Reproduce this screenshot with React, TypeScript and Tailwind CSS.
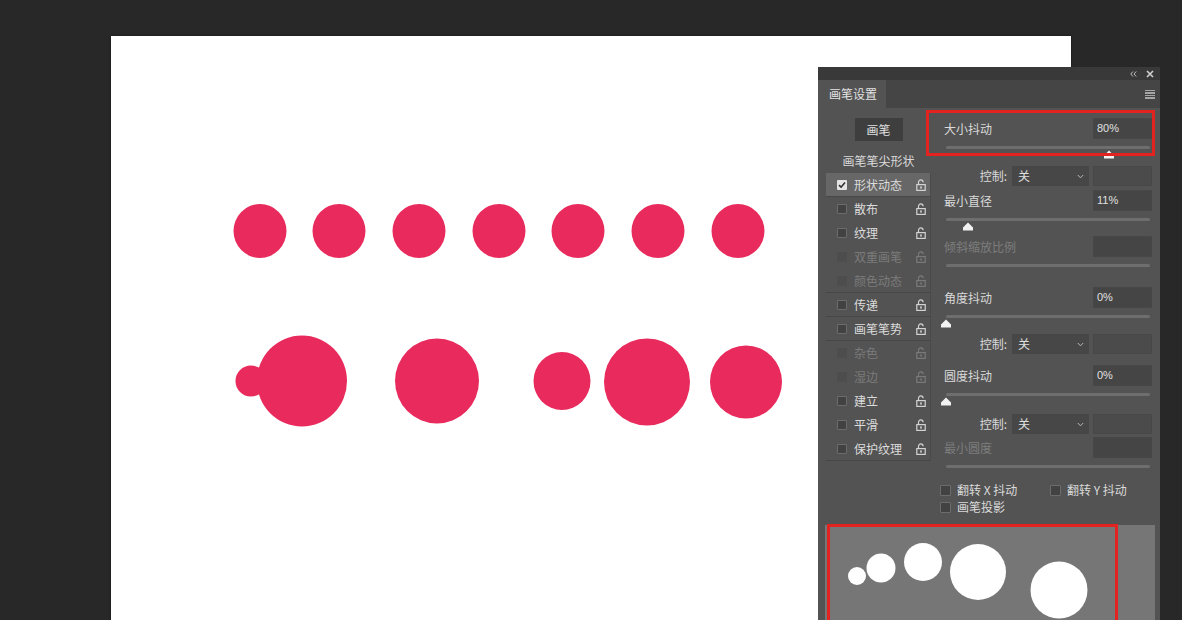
import React from 'react';

const CJK = "font-['Noto_Sans_CJK_SC','Liberation_Sans',sans-serif]";

type ListItem = { label: string; checked?: boolean; disabled?: boolean; lineAfter?: boolean };

const items: ListItem[] = [
  { label: '形状动态', checked: true, lineAfter: true },
  { label: '散布' },
  { label: '纹理' },
  { label: '双重画笔', disabled: true },
  { label: '颜色动态', disabled: true, lineAfter: true },
  { label: '传递', lineAfter: true },
  { label: '画笔笔势', lineAfter: true },
  { label: '杂色', disabled: true },
  { label: '湿边', disabled: true },
  { label: '建立' },
  { label: '平滑' },
  { label: '保护纹理', lineAfter: true },
];

/** Open padlock glyph used at the end of each list row. */
function Lock({ dim }: { dim?: boolean }) {
  return (
    <svg width="10" height="12" viewBox="0 0 10 12" className={dim ? 'opacity-30' : ''}>
      <path d="M2.5 5.5 V3.2 a2.3 2.3 0 0 1 4.6 0" fill="none" stroke="#d4d4d4" strokeWidth="1.2" />
      <rect x="0.8" y="5.6" width="8.4" height="5.8" fill="none" stroke="#d4d4d4" strokeWidth="1.2" />
      <rect x="4.2" y="7.4" width="1.6" height="2.2" fill="#d4d4d4" />
    </svg>
  );
}

function Check({ checked, disabled, size = 10 }: { checked?: boolean; disabled?: boolean; size?: number }) {
  if (checked) {
    return (
      <span className="flex h-[10px] w-[10px] flex-shrink-0 items-center justify-center rounded-[1px] bg-[#e4e4e4]">
        <svg width="8" height="8" viewBox="0 0 8 8">
          <path d="M1 4.2 L3.1 6.2 L7 1.6" fill="none" stroke="#2f2f2f" strokeWidth="1.6" />
        </svg>
      </span>
    );
  }
  return (
    <span
      style={{ width: size, height: size }}
      className={[
        'flex-shrink-0 rounded-[1px]',
        disabled ? 'bg-[#4d4d4d]' : 'border border-[#6c6c6c] bg-[#424242]',
      ].join(' ')}
    />
  );
}

function Thumb() {
  return (
    <svg width="11" height="9" viewBox="0 0 11 9">
      <path d="M5.5 0.5 L10.5 5.5 V8.5 H0.5 V5.5 Z" fill="#f2f2f2" />
    </svg>
  );
}

/** Thin track with an optional handle; value is 0..100. */
function Slider({ value }: { value?: number }) {
  return (
    <div className="relative ml-[2px] mr-[2px] h-[19px] pt-[7px]">
      <div className="h-[3px] rounded-full bg-[#6e6e6e]" />
      {value !== undefined && (
        <div className="absolute top-[11px] -translate-x-1/2" style={{ left: `${value}%` }}>
          <Thumb />
        </div>
      )}
    </div>
  );
}

function Field({ label, value, disabled }: { label: string; value?: string; disabled?: boolean }) {
  return (
    <div className="flex h-[21px] items-center justify-between">
      <span className={`text-[12px] ${disabled ? 'text-[#7d7d7d]' : 'text-[#dadada]'}`}>{label}</span>
      <div className="flex h-[21px] w-[59px] items-center border border-[#474747] bg-[#454545] pl-[3px] font-['Liberation_Sans',sans-serif] text-[11px] text-[#e0e0e0]">
        {value}
      </div>
    </div>
  );
}

function Control() {
  return (
    <div className="flex h-[20px] items-center justify-end gap-[4px]">
      <span className="mr-[1px] text-[12px] text-[#dadada]">控制:</span>
      <div className="flex h-[20px] w-[77px] items-center justify-between bg-[#474747] pl-[6px] pr-[5px] text-[12px] text-[#e0e0e0]">
        <span>关</span>
        <svg width="7" height="5" viewBox="0 0 7 5">
          <path d="M0.8 1 L3.5 3.8 L6.2 1" fill="none" stroke="#b8b8b8" strokeWidth="1" />
        </svg>
      </div>
      <div className="h-[20px] w-[59px] border border-[#474747] bg-[#4b4b4b]" />
    </div>
  );
}

function Panel() {
  return (
    <div className={`absolute left-[818px] top-[67px] h-[553px] w-[342px] overflow-hidden bg-[#535353] ${CJK}`}>
      {/* title strip */}
      <div className="flex h-[13px] items-center justify-end gap-[9px] bg-[#393939] pr-[6px]">
        <svg width="7" height="6" viewBox="0 0 7 6">
          <path d="M3 0.5 L0.8 3 L3 5.5 M6.2 0.5 L4 3 L6.2 5.5" fill="none" stroke="#bdbdbd" strokeWidth="1" />
        </svg>
        <svg width="8" height="8" viewBox="0 0 8 8">
          <path d="M1 1 L7 7 M7 1 L1 7" stroke="#d0d0d0" strokeWidth="1.6" />
        </svg>
      </div>
      {/* tab strip */}
      <div className="flex h-[28px] items-stretch bg-[#454545]">
        <div className="flex w-[68px] items-center bg-[#535353] pl-[11px] text-[12px] text-[#e2e2e2]">画笔设置</div>
        <div className="flex flex-1 items-center justify-end pr-[5px]">
          <div className="flex flex-col gap-[1px]">
            <div className="h-[1.5px] w-[10px] bg-[#a5a5a5]" />
            <div className="h-[1.5px] w-[10px] bg-[#a5a5a5]" />
            <div className="h-[1.5px] w-[10px] bg-[#a5a5a5]" />
            <div className="h-[1.5px] w-[10px] bg-[#a5a5a5]" />
          </div>
        </div>
      </div>

      <div className="flex">
        {/* left column */}
        <div className="w-[117px] pl-[8px]">
          <div className="flex w-[105px] flex-col items-center">
            <div className="mt-[10px] flex h-[23px] w-[48px] items-center justify-center bg-[#3e3e3e] text-[12px] text-[#e0e0e0]">
              画笔
            </div>
            <div className="mt-[12px] h-[16px] text-[12px] leading-[16px] text-[#dadada]">画笔笔尖形状</div>
          </div>
          <div className="mt-[4px] w-[105px] border-r border-[#4a4a4a]">
            {items.map((it) => (
              <div
                key={it.label}
                className={[
                  'flex h-[24px] items-center pl-[11px] pr-[4px]',
                  it.checked ? 'bg-[#676767]' : '',
                  it.lineAfter ? 'border-b border-[#474747]' : '',
                ].join(' ')}
              >
                <Check checked={it.checked} disabled={it.disabled} />
                <span className={`ml-[7px] flex-1 text-[12px] ${it.disabled ? 'text-[#7b7b7b]' : 'text-[#dcdcdc]'}`}>
                  {it.label}
                </span>
                <Lock dim={it.disabled} />
              </div>
            ))}
          </div>
        </div>

        {/* right column */}
        <div className="relative w-[225px] pl-[9px] pr-[8px]">
          <div className="mt-[10px]">
            <Field label="大小抖动" value="80%" />
          </div>
          <Slider value={80} />
          <div className="mt-[8px]">
            <Control />
          </div>
          <div className="mt-[4px]">
            <Field label="最小直径" value="11%" />
          </div>
          <Slider value={11} />
          <div className="mt-[6px]">
            <Field label="倾斜缩放比例" disabled />
          </div>
          <Slider />
          <div className="mt-[11px]">
            <Field label="角度抖动" value="0%" />
          </div>
          <Slider value={0} />
          <div className="mt-[7px]">
            <Control />
          </div>
          <div className="mt-[11px]">
            <Field label="圆度抖动" value="0%" />
          </div>
          <Slider value={0} />
          <div className="mt-[9px]">
            <Control />
          </div>
          <div className="mt-[3px]">
            <Field label="最小圆度" disabled />
          </div>
          <Slider />

          <div className="-ml-[4px] mt-[6px] flex flex-col gap-[3px] text-[12px] text-[#dadada]">
            <div className="flex h-[14px] items-center">
              <div className="flex w-[110px] items-center gap-[6px]">
                <Check size={11} />
                <span>翻转 X 抖动</span>
              </div>
              <div className="flex items-center gap-[6px]">
                <Check size={11} />
                <span>翻转 Y 抖动</span>
              </div>
            </div>
            <div className="flex h-[14px] items-center gap-[6px]">
              <Check size={11} />
              <span>画笔投影</span>
            </div>
          </div>

          {/* annotation */}
          <div className="pointer-events-none absolute left-[-9px] top-[2px] h-[46px] w-[229px] border-[3px] border-[#e2231f]" />
        </div>
      </div>

      {/* stroke preview */}
      <div className="relative ml-[7px] mt-[11px] h-[120px] w-[330px] bg-[#767676]">
        <svg width="330" height="120" viewBox="0 0 330 120" className="block">
          <circle cx="32" cy="51" r="9" fill="#fff" />
          <circle cx="56" cy="43" r="14.5" fill="#fff" />
          <circle cx="98" cy="37" r="19" fill="#fff" />
          <circle cx="153" cy="47" r="28" fill="#fff" />
          <circle cx="234" cy="65" r="28.5" fill="#fff" />
        </svg>
        <div className="pointer-events-none absolute left-[2px] top-[-1px] h-[130px] w-[291px] border-[3px] border-[#e2231f]" />
      </div>
    </div>
  );
}

export default function App() {
  return (
    <div className="relative h-[620px] w-[1182px] overflow-hidden bg-[#282828]">
      <div className="ml-[111px] mt-[36px] h-[584px] w-[960px] bg-white shadow-[0_0_2px_rgba(0,0,0,0.5)]">
        <svg width="960" height="584" viewBox="0 0 960 584" className="block">
          {[149, 228, 308, 388, 467, 547, 627].map((cx) => (
            <ellipse key={cx} cx={cx} cy={195} rx={26.5} ry={27} fill="#e82a5d" />
          ))}
          <circle cx="140" cy="345" r="15.5" fill="#e82a5d" />
          <ellipse cx="191" cy="345" rx="45" ry="45.5" fill="#e82a5d" />
          <ellipse cx="326" cy="345" rx="42" ry="42.5" fill="#e82a5d" />
          <ellipse cx="451" cy="345" rx="28.5" ry="29" fill="#e82a5d" />
          <ellipse cx="536" cy="346" rx="43" ry="43.5" fill="#e82a5d" />
          <ellipse cx="635" cy="346" rx="36" ry="36.5" fill="#e82a5d" />
        </svg>
      </div>
      <Panel />
    </div>
  );
}
